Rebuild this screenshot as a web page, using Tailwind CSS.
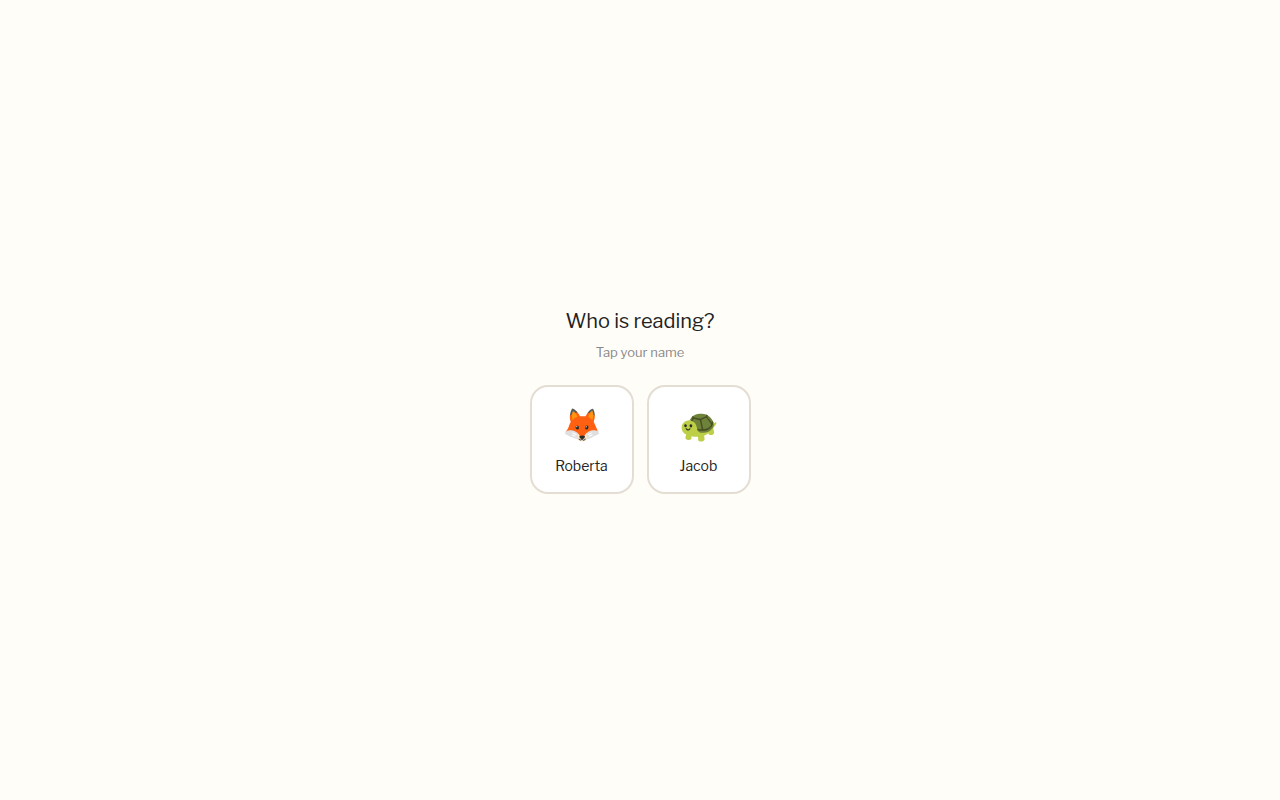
<!DOCTYPE html>
<html lang="en"><head><meta charset="utf-8"><title>Who is reading?</title>
<meta name="viewport" content="width=device-width, initial-scale=1">
<script src="https://cdn.jsdelivr.net/npm/@tailwindcss/browser@4"></script></head>
<body class="bg-[#fffdf8] text-[#222222] font-['Libre_Franklin','Liberation_Sans',sans-serif]">
<main class="flex min-h-screen flex-col items-center justify-center p-6 text-center">
<h1 class="text-xl leading-[31px]">Who is reading?</h1>
<p class="mt-[5px] text-[13px] leading-[21px] text-[#888888]">Tap your name</p>
<div class="mt-[22px] flex flex-wrap justify-center gap-[13px]">
<button type="button" class="flex w-[104px] flex-col items-center gap-2 rounded-[18px] border-2 border-[#e4ddd3] bg-white py-4"><span class="text-[32px] leading-[44px]" aria-hidden="true">🦊</span><span class="text-sm leading-[21px]">Roberta</span></button>
<button type="button" class="flex w-[104px] flex-col items-center gap-2 rounded-[18px] border-2 border-[#e4ddd3] bg-white py-4"><span class="text-[32px] leading-[44px]" aria-hidden="true">🐢</span><span class="text-sm leading-[21px]">Jacob</span></button>
</div></main></body></html>
